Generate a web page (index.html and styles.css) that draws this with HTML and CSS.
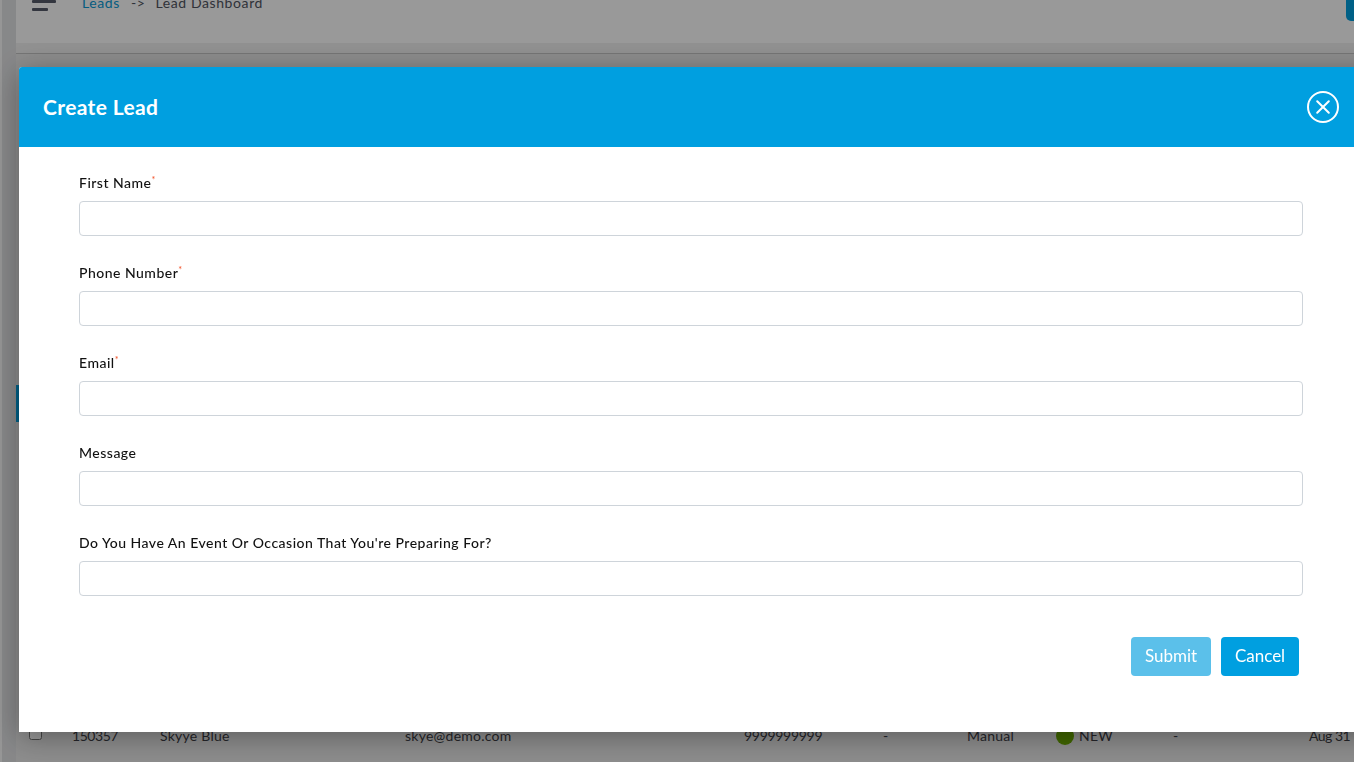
FILE: index.html
```html
<!DOCTYPE html>
<html lang="en">
<head>
<meta charset="utf-8">
<title>Create Lead</title>
<link rel="stylesheet" href="styles.css">
</head>
<body>
<div class="app">
  <aside class="sidebar"><span class="side-active"></span></aside>
  <main class="content">
    <header class="topbar">
      <button class="menu-btn" aria-label="Menu"><i class="l1"></i><i class="l2"></i></button>
      <nav class="crumbs"><a class="crumb-link">Leads</a><span class="arrow">-&gt;</span><span>Lead Dashboard</span></nav>
      <span class="top-action"></span>
    </header>
    <div class="subbar"></div>
    <div class="spacer"></div>
    <div class="row">
      <span class="c-check"><input type="checkbox" class="check"></span>
      <span class="c-id">150357</span>
      <span class="c-name">Skyye Blue</span>
      <span class="c-email">skye@demo.com</span>
      <span class="c-phone">9999999999</span>
      <span class="c-dash">-</span>
      <span class="c-src">Manual</span>
      <span class="c-status"><i class="dot"></i>NEW</span>
      <span class="c-dash2">-</span>
      <span class="c-date">Aug 31</span>
    </div>
  </main>
</div>
<div class="backdrop"></div>
<section class="modal">
  <header class="modal-head">
    <h2>Create Lead</h2>
    <button class="close" aria-label="Close">
      <svg width="32" height="32" viewBox="0 0 32 32"><circle cx="16" cy="16" r="15" fill="none" stroke="#fff" stroke-width="2"/><path d="M10.2 10.2 21.8 21.8M21.8 10.2 10.2 21.8" fill="none" stroke="#fff" stroke-width="2" stroke-linecap="round"/></svg>
    </button>
  </header>
  <form class="modal-body">
    <div class="field"><label>First Name<sup>*</sup></label><input type="text"></div>
    <div class="field"><label>Phone Number<sup>*</sup></label><input type="text"></div>
    <div class="field"><label>Email<sup>*</sup></label><input type="text"></div>
    <div class="field"><label>Message</label><input type="text"></div>
    <div class="field"><label>Do You Have An Event Or Occasion That You're Preparing For?</label><input type="text"></div>
    <div class="actions">
      <button type="button" class="btn btn-submit">Submit</button>
      <button type="button" class="btn btn-cancel">Cancel</button>
    </div>
  </form>
</section>
</body>
</html>
```
FILE: styles.css
```css
* { box-sizing: border-box; }
html, body { margin: 0; height: 100%; overflow: hidden; }
body {
  font-family: "Lato", "Liberation Sans", sans-serif;
  background: #ebebeb;
  color: #3e3e46;
}
.app { display: flex; height: 762px; }
.sidebar {
  width: 16px;
  flex: none;
  background: #e2e3e5;
  border-left: 2px solid #fafafa;
  padding-top: 385px;
}
.side-active { display: block; width: 3px; height: 37px; margin-left: 14px; background: #00a0e0; }
.content { flex: 1; min-width: 0; display: flex; flex-direction: column; }
.topbar {
  height: 43px;
  flex: none;
  background: #fff;
  display: flex;
  align-items: flex-start;
  padding-left: 16px;
  position: relative;
}
.menu-btn {
  width: 24px; height: 14px; padding: 0;
  border: 0; background: none;
  display: flex; flex-direction: column; gap: 5px;
}
.menu-btn i { display: block; height: 3px; background: #555a6a; border-radius: 1px; }
.menu-btn .l1 { width: 24px; }
.menu-btn .l2 { width: 16px; }
.crumbs { margin: -5px 0 0 26px; font-size: 14px; line-height: 16px; letter-spacing: .6px; display: flex; color: #505460; }
.crumb-link { color: #0a9ad6; }
.arrow { margin: 0 10px 0 11px; }
.top-action {
  position: absolute; right: -8px; top: -6px;
  width: 16px; height: 27px;
  background: #00a0e0; border-radius: 5px;
}
.subbar { height: 11px; flex: none; background: #f2f2f2; border-bottom: 1px solid #c4c4c4; }
.spacer { flex: 1; }
.row {
  height: 34px;
  flex: none;
  font-size: 14px;
  line-height: 18px;
  display: flex;
  padding: 0 0 0 13px;
  white-space: nowrap;
  letter-spacing: .25px;
}
.row > span { flex: none; margin-top: -1px; }
.row > .c-check { margin-top: -1px; }
.check { width: 13px; height: 13px; margin: 0; display: block; }
.c-check { width: 43px; }
.row > .c-id { width: 88px; letter-spacing: -.45px; }
.c-name { width: 245px; }
.c-email { width: 339px; }
.row > .c-phone { width: 139px; letter-spacing: -.3px; }
.c-dash { width: 84px; }
.c-src { width: 89px; }
.c-status { width: 117px; display: flex; gap: 5px; }
.dot { width: 18px; height: 18px; border-radius: 50%; background: #6cab00; }
.c-dash2 { width: 136px; }
.row > .c-date { letter-spacing: -.5px; }
.backdrop { position: fixed; inset: 0; background: rgba(0, 0, 0, .4); }
.modal {
  position: fixed;
  left: 19px; top: 67px;
  width: 1395px; height: 665px;
  background: #fff;
  border-radius: 3px 0 0 0;
  box-shadow: 0 5px 30px rgba(0, 0, 0, .35);
}
.modal-head {
  height: 80px;
  background: #009fe0;
  color: #fff;
  display: flex;
  align-items: center;
  padding-left: 24px;
  position: relative;
  border-radius: 3px 0 0 0;
}
.modal-head h2 { margin: 0; font-size: 21px; font-weight: 700; line-height: 26px; letter-spacing: .37px; }
.close {
  position: absolute; left: 1288px; top: 24px;
  width: 32px; height: 32px; padding: 0;
  border: 0; background: none; display: block;
}
.close svg { display: block; }
.modal-body { padding: 27px 0 0 60px; width: 1284px; }
.field { height: 90px; }
.field label { display: block; font-size: 14px; line-height: 18px; height: 27px; letter-spacing: .49px; color: #111; font-weight: 500; }
.field sup { color: #f2552c; font-size: 9px; line-height: 0; vertical-align: 5px; letter-spacing: 0; }
.field input {
  display: block;
  width: 100%; height: 35px;
  border: 1px solid #ced4da;
  border-radius: 4px;
  background: #fff;
  outline: 0;
}
.actions { display: flex; justify-content: flex-end; gap: 10px; margin-top: 13px; padding-right: 4px; }
.btn {
  height: 39px;
  border: 0;
  border-radius: 4px;
  color: #fff;
  font: 400 17px/37px "Lato", "Liberation Sans", sans-serif;
  padding: 0 0 2px;
}
.btn-submit { width: 80px; background: #5bc0ea; }
.btn-cancel { width: 78px; background: #009fe0; }
```
